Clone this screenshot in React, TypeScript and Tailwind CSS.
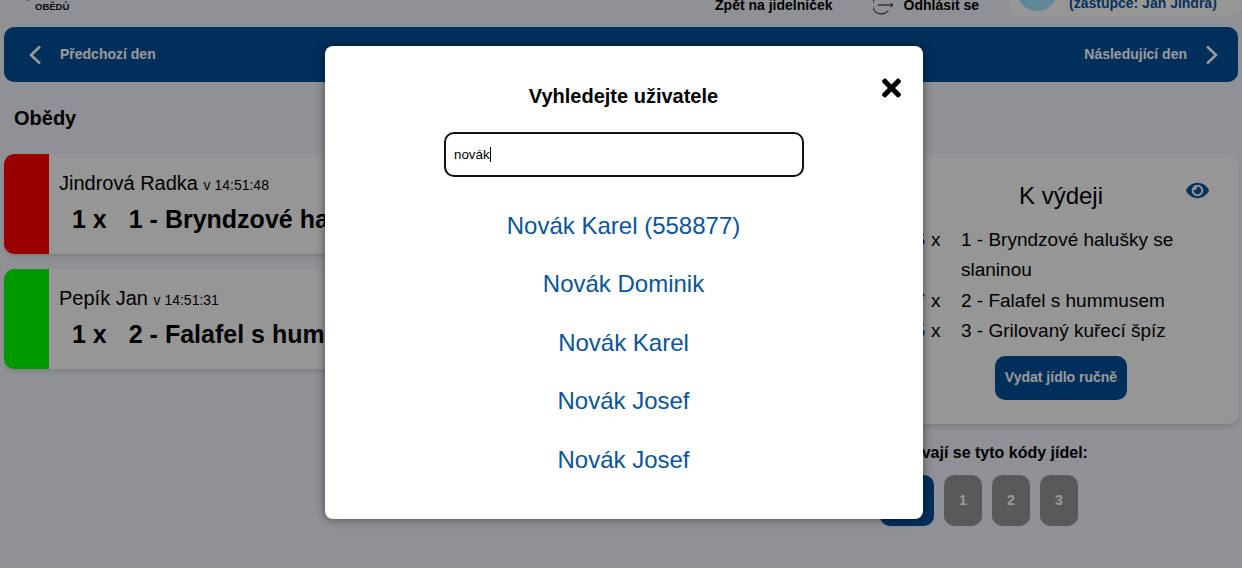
import { useEffect, useRef, useState } from 'react';
import { FaEye, FaTimes } from 'react-icons/fa';

const orders = [
    { color: 'bg-[#ff0000]', name: 'Jindrová Radka', time: 'v 14:51:48', meal: '1 - Bryndzové halušky se slaninou' },
    { color: 'bg-[#00ff00]', name: 'Pepík Jan', time: 'v 14:51:31', meal: '2 - Falafel s hummusem' },
];

const pending = [
    { count: 6, meal: '1 - Bryndzové halušky se slaninou' },
    { count: 7, meal: '2 - Falafel s hummusem' },
    { count: 5, meal: '3 - Grilovaný kuřecí špíz' },
];

const results = ['Novák Karel (558877)', 'Novák Dominik', 'Novák Karel', 'Novák Josef', 'Novák Josef'];

function Chevron({ right = false }: { right?: boolean }) {
    return (
        <svg width="14" height="20" viewBox="0 0 14 20" fill="none" stroke="white" strokeWidth="2.6">
            <polyline points={right ? '2,1.5 11,10 2,18.5' : '12,1.5 3,10 12,18.5'} />
        </svg>
    );
}

export default function App() {
    const [query, setQuery] = useState('novák');
    const inputRef = useRef<HTMLInputElement>(null);

    useEffect(() => {
        const el = inputRef.current;
        if (el) {
            el.focus();
            el.setSelectionRange(el.value.length, el.value.length);
        }
    }, []);

    return (
        <div className="relative h-[568px] w-[1242px] overflow-hidden bg-[#f0f2fa] font-['Liberation_Sans',Arial,sans-serif] text-black">
            {/* Header, page is scrolled so only the bottom is visible */}
            <header className="flex h-[27px] items-end overflow-hidden">
                <div className="mb-[15px] ml-[26px] flex items-end gap-[5px]">
                    <div className="mb-[11px] h-[1px] w-[4px] bg-[#e0a860]" />
                    <div className="text-[9.5px] leading-[10px] font-bold text-[#111]">OBĚDŮ</div>
                </div>
                <div className="mb-[14px] ml-auto text-[14px] leading-[15px] font-bold">Zpět na jídelníček</div>
                <div className="mb-[12px] ml-[40px] flex items-center gap-[11px]">
                    <svg width="20" height="20" viewBox="0 0 20 20" fill="none" stroke="#111" strokeWidth="1">
                        <path d="M15.5 4.5 A9 9 0 1 0 15.5 15.5" />
                        <path d="M5 10 H20 M17.5 8 L20 10 L17.5 12" />
                    </svg>
                    <span className="text-[14px] leading-[15px] font-bold">Odhlásit se</span>
                </div>
                <div className="mb-[11px] ml-[30px] flex h-[40px] w-[233px] items-end gap-[12px] self-end overflow-hidden rounded-[10px] bg-[#fbfbfb] pl-[8px]">
                    <div className="mb-[5px] h-[40px] w-[40px] shrink-0 rounded-full bg-[#9fe2ff]" />
                    <div className="mb-[5px] text-[14px] leading-[15px] font-bold whitespace-nowrap text-[#0a5499]">(zástupce: Jan Jindra)</div>
                </div>
            </header>

            <nav className="mx-[4px] flex h-[55px] items-center justify-between rounded-[10px] bg-[#024f99] pr-[19px] pl-[24px] text-[14px] font-bold text-white">
                <div className="flex items-center gap-[18px]">
                    <Chevron />
                    <span>Předchozí den</span>
                </div>
                <div className="flex items-center gap-[18px]">
                    <span>Následující den</span>
                    <Chevron right />
                </div>
            </nav>

            <main className="flex gap-[15px] pr-[3px] pl-[4px]">
                <section className="min-w-0 flex-1">
                    <h2 className="mt-[24px] mb-[24px] pl-[10px] text-[20px] leading-[24px] font-bold">Obědy</h2>
                    <div className="flex flex-col gap-[15px]">
                        {orders.map(order => (
                            <div key={order.name} className="flex h-[100px] overflow-hidden rounded-[10px] bg-[#fbfbfb] shadow-md">
                                <div className={`w-[45px] shrink-0 ${order.color}`} />
                                <div className="pt-[17px] pl-[10px]">
                                    <div className="text-[20px] leading-[24px]">
                                        {order.name} <span className="text-[14px]">{order.time}</span>
                                    </div>
                                    <div className="mt-[7px] pl-[13px] text-[25px] leading-[30px] font-bold whitespace-nowrap">
                                        1 x<span className="ml-[22px]">{order.meal}</span>
                                    </div>
                                </div>
                            </div>
                        ))}
                    </div>
                </section>

                <aside className="w-[359px] shrink-0 pt-[72px]">
                    <div className="relative ml-[3px] h-[270px] rounded-[10px] bg-[#fbfbfb] shadow-md">
                        <h3 className="pt-[26px] text-center text-[24px] leading-[32px]">K výdeji</h3>
                        <FaEye className="absolute top-[25px] right-[30px] h-[23px] w-[23px] text-[#0a5499]" />
                        <div className="mt-[13px] flex flex-col text-[19px] leading-[30.4px]">
                            {pending.map(row => (
                                <div key={row.meal} className="flex">
                                    <span className="w-[42px] shrink-0 text-right">{row.count}</span>
                                    <span className="ml-[6px] w-[30px] shrink-0">x</span>
                                    <span className="w-[240px]">{row.meal}</span>
                                </div>
                            ))}
                        </div>
                        <div className="mt-[9px] flex justify-center">
                            <button className="h-[44px] w-[132px] rounded-[10px] bg-[#024f99] text-[14px] font-bold text-white">Vydat jídlo ručně</button>
                        </div>
                    </div>
                    <div className="mt-[19px] pl-[4px] text-[16px] leading-[20px] font-bold">Vydávají se tyto kódy jídel:</div>
                    <div className="mt-[12px] flex gap-[10px]">
                        <button className="h-[51px] w-[54px] rounded-[10px] bg-[#024f99] text-[14px] font-bold text-white">Vše</button>
                        {['1', '2', '3'].map(code => (
                            <button key={code} className="h-[51px] w-[38px] rounded-[10px] bg-[#959595] text-[14px] font-bold text-white">{code}</button>
                        ))}
                    </div>
                </aside>
            </main>

            {/* Search dialog over dimmed page */}
            <div className="absolute inset-0 bg-black/40">
                <div className="absolute top-[46px] left-[325px] flex h-[473px] w-[598px] flex-col items-center rounded-[8px] bg-white shadow-[0_0_10px_rgba(0,0,0,0.5)]">
                    <FaTimes className="absolute top-[28px] right-[22px] h-[28px] w-[19px] text-black" />
                    <h2 className="mt-[38px] -translate-x-[0.5px] text-[20px] leading-[24px] font-bold">Vyhledejte uživatele</h2>
                    <div className="relative mt-[24px]">
                        <input
                            ref={inputRef}
                            value={query}
                            onChange={e => setQuery(e.target.value)}
                            className="h-[45px] w-[360px] rounded-[10px] border-2 border-[#111] bg-white px-[8px] text-[13.33px] caret-transparent outline-none"
                        />
                        {/* caret */}
                        <span className="absolute top-[15px] left-[46px] h-[15px] w-px bg-black" />
                    </div>
                    <div className="mt-[20px] flex -translate-x-[0.5px] flex-col items-center">
                        {results.map((name, i) => (
                            <a key={i} className="text-[24px] leading-[58.4px] text-[#0a5499]">{name}</a>
                        ))}
                    </div>
                </div>
            </div>
        </div>
    );
}
